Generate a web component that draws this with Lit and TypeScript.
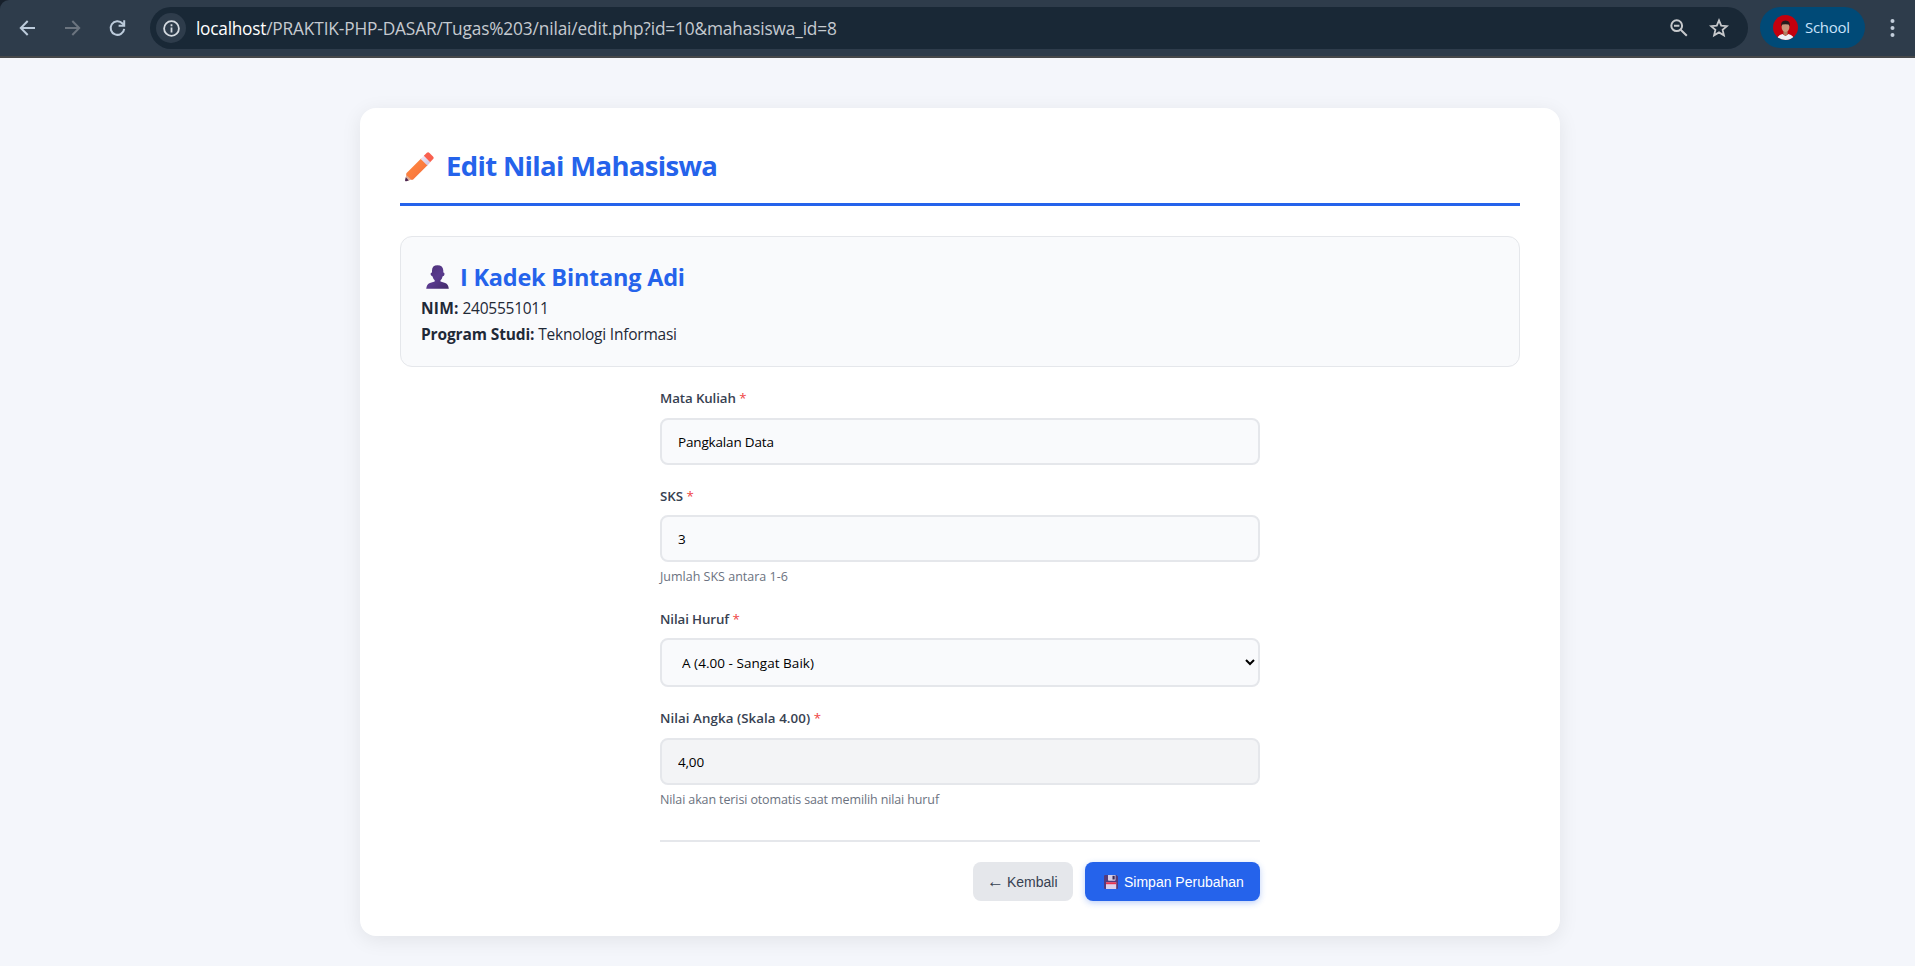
import { LitElement, html, css, svg } from "lit";
import { customElement } from "lit/decorators.js";

const pencil = svg`<defs>
  <linearGradient id="wood" x1="0" y1="0" x2="1" y2="1"><stop offset="0" stop-color="#ff8a3c"/><stop offset=".55" stop-color="#fb7c3f"/><stop offset="1" stop-color="#ec6338"/></linearGradient>
  <linearGradient id="band" x1="0" y1="0" x2="1" y2="1"><stop offset="0" stop-color="#f3ecfa"/><stop offset="1" stop-color="#c9bfe0"/></linearGradient></defs>
  <path d="M1.6 21.5 7.6 27.3 1.2 29.2Q0 29.4 .1 28.2Z" fill="#dfb09a"/>
  <path d="M.8 25.2 3.8 28.4 1.1 29.2Q0 29.4.1 28.3Z" fill="#4a2754"/>
  <path d="M16.4 6.2 23 12.7 8.2 27.4Q7 28.3 5.8 27.3L1.6 23.2Q.8 22 1.6 21Z" fill="url(#wood)"/>
  <path d="M18.6 4 25.2 10.5 22.3 13.4 15.7 6.9Z" fill="url(#band)"/>
  <path d="M18.8 3.8 21.9.8Q23.2-.2 24.5.9L28 4.4Q29.3 5.7 28.1 7.1L25.1 10.2Z" fill="#f9604f"/>`;

const person = svg`<defs><linearGradient id="skin" x1="0" y1="0" x2="1" y2="1"><stop offset="0" stop-color="#4a2f74"/><stop offset=".5" stop-color="#5a3a8e"/><stop offset="1" stop-color="#412a66"/></linearGradient></defs>
  <path d="M6 5.4Q6 .2 11.5.2T17.3 5.4V7.5Q18.7 7.4 18.5 9.2T16.7 11.2Q16 14 14.5 15.2V16.4L19.2 18.1Q22.4 19.3 22.8 23.8H.2Q.7 19.3 3.9 18.1L8.7 16.4V15.2Q7.2 14 6.4 11.2 4.8 10.8 4.6 9.2T6 7.5Z" fill="url(#skin)"/>`;

const floppy = svg`<path d="M1.3 0H12.4L14 1.6V13Q14 14 13 14H1Q0 14 0 13V1Q0 0 1.3 0Z" fill="#553a7b"/>
  <path d="M4 0H11.5V5Q11.5 5.8 10.7 5.8H4.8Q4 5.8 4 5Z" fill="#d8cfe8"/><path d="M8.5.8H10.7V4.5H8.5Z" fill="#3b2954"/>
  <path d="M2 7.3H12.2V14H2Z" fill="#dcd0ea"/><path d="M2 7.3H12.2V9.2H2Z" fill="#e8344f"/>`;

@customElement("app-root")
export class AppRoot extends LitElement {
  static styles = css`
    :host { display: block; min-height: 966px; background: #f4f6fb; font-family: "Open Sans", "Noto Sans", sans-serif; color: #1f2937; }
    * { box-sizing: border-box; }
    svg { display: block; flex: none; }
    .corner { background: #17202b; }
    .chrome { height: 58px; display: flex; align-items: flex-start; background: #2e3c4b; border-bottom: 2px solid #46484a; border-top-left-radius: 9px; padding: 7px 20px 0 17px; }
    .nav { display: flex; width: 133px; height: 41px; align-items: center; gap: 24px; }
    .nav svg { stroke: #bccbdb; fill: none; stroke-width: 2; }
    .nav .off { stroke: #6b747f; }
    .bar { flex: 1; height: 42px; border-radius: 21px; background: #192836; display: flex; align-items: center; padding: 0 19px 0 6px; }
    .info { width: 30px; height: 30px; border-radius: 50%; background: #2e3c4b; display: grid; place-items: center; }
    .url { flex: 1; margin-left: 10px; padding-top: 2px; font-size: 17.3px; line-height: 40px; letter-spacing: -.15px; color: #c5cad0; white-space: nowrap; }
    .host { color: #fff; letter-spacing: -.25px; }
    .tools { display: flex; gap: 21px; align-items: center; }
    .profile { width: 105px; height: 41px; margin-left: 12px; border-radius: 21px; background: #004a77; color: #c9e3fb; display: flex; align-items: center; padding-left: 13px; gap: 7px; font-size: 15px; line-height: 38px; letter-spacing: -.3px; }
    .profile span { padding-bottom: 2px; }
    .more { margin-left: 25px; height: 41px; display: flex; align-items: center; }
    .card { width: 1200px; height: 828px; margin: 50px 0 0 360px; padding: 40px; background: #fff; border-radius: 16px; box-shadow: 0 4px 20px rgba(0, 0, 0, .08); }
    h1 { margin: 0 0 30px; display: flex; height: 58px; border-bottom: 3px solid #2563eb; color: #2563eb; font-size: 27.5px; line-height: 35px; letter-spacing: -.67px; }
    h1 svg { margin: 4px 12px 0 5px; }
    .student { height: 131px; border: 1px solid #e5e7eb; border-radius: 12px; background: #f9fafc; padding: 21px 20px 19px; font-size: 15.5px; line-height: 26px; letter-spacing: -.22px; }
    h2 { margin: 0; display: flex; height: 37px; color: #2563eb; font-size: 23.5px; line-height: 39px; letter-spacing: -.22px; }
    h2 svg { margin: 7px 11px 0 5px; }
    .student b { letter-spacing: -.13px; }
    .student .nim { letter-spacing: .2px; }
    .student .num { letter-spacing: -.24px; }
    form { width: 600px; margin: 0 auto; }
    .field { padding-top: 20px; }
    .field.after { padding-top: 21px; }
    label { display: block; height: 30px; font-size: 13.3px; line-height: 22px; font-weight: 600; color: #374151; }
    label.tall { height: 31px; }
    .tight { letter-spacing: -.1px; }
    .wide { letter-spacing: .07px; }
    i { font-style: normal; font-weight: 400; color: #ef4444; }
    input, select { display: block; width: 600px; height: 47px; margin: 0; border: 2px solid #e5e7eb; border-radius: 8px; background: #f9fafc; padding: 0 16px; font: 13.5px "Open Sans", "Noto Sans", sans-serif; color: #000; outline: 0; letter-spacing: -.17px; }
    select { height: 49px; letter-spacing: .04px; }
    input[readonly] { background: #f3f4f6; }
    small { display: block; margin-top: 5px; height: 20px; font-size: 12.5px; line-height: 20px; color: #6b7280; }
    .auto { letter-spacing: -.12px; }
    .actions { margin-top: 30px; border-top: 2px solid #e5e7eb; padding-top: 20px; display: flex; justify-content: flex-end; gap: 12px; }
    button { height: 39px; border: 0; border-radius: 8px; padding: 0 16px; display: flex; align-items: center; font: 14px "Liberation Sans", Arial, sans-serif; }
    .back { width: 100px; background: #e5e7eb; color: #374151; white-space: nowrap; padding: 0 0 0 14px; gap: 5px; }
    .arrow { width: 15px; font-size: 17px; line-height: 14px; }
    .save { width: 175px; background: #2563eb; color: #fff; padding-left: 19px; gap: 6px; white-space: nowrap; box-shadow: 0 2px 6px rgba(37, 99, 235, .3); }
  `;

  private label(text: string, cls = "") {
    return html`<label class=${cls}>${text} <i>*</i></label>`;
  }

  render() {
    return html`
      <div class="corner"><header class="chrome">
        <div class="nav">
          <svg width="21" height="18" viewBox="0 0 21 18"><path d="M18 9H4.5M10.7 2 3.8 9l6.9 7"/></svg>
          <svg class="off" width="21" height="18" viewBox="0 0 21 18"><path d="M3 9h13.5M10.3 2l6.9 7-6.9 7"/></svg>
          <svg width="21" height="18" viewBox="0 0 21 18"><path d="M17.2 9.8A6.8 6.8 0 1 1 15.5 4.5L17 6"/><path d="M17.2 1.2V6.8H11.6"/></svg>
        </div>
        <div class="bar">
          <div class="info"><svg width="17" height="17" viewBox="0 0 17 17" fill="none" stroke="#d5dae0" stroke-width="1.8"><circle cx="8.5" cy="8.5" r="7.4"/><path d="M8.5 7.6v4.8M8.5 4.3v1.9"/></svg></div>
          <div class="url"><span class="host">localhost</span>/PRAKTIK-PHP-DASAR/Tugas%203/nilai/edit.php?id=10&amp;mahasiswa_id=8</div>
          <div class="tools">
            <svg width="18" height="18" viewBox="0 0 18 18" fill="none" stroke="#c7c9cc" stroke-width="2"><circle cx="6.7" cy="6.7" r="5.4"/><path d="M10.7 10.7 16.8 16.8M4 6.7h5.4"/></svg>
            <svg width="20" height="20" viewBox="0 0 20 20" fill="none" stroke="#c7c9cc" stroke-width="1.8"><path d="M10 2.4 12.2 7.6 17.9 8.1 13.6 11.8 14.9 17.3 10 14.4 5.1 17.3 6.4 11.8 2.1 8.1 7.8 7.6Z"/></svg>
          </div>
        </div>
        <div class="profile">
          <svg width="25" height="25" viewBox="0 0 25 25"><defs><clipPath id="disc"><circle cx="12.5" cy="12.5" r="12.5"/></clipPath></defs>
            <g clip-path="url(#disc)"><path fill="#c3000d" d="M0 0h25v25H0z"/><path fill="#eef0f7" d="M4 25Q3.8 20.6 9.5 19L12.5 21 15.5 19Q21.2 20.6 21 25Z"/><path fill="#b07c62" d="M10.4 15h4.2v4.3L12.5 21 10.4 19.3Z"/><ellipse cx="12.5" cy="12" rx="3.9" ry="5" fill="#c8957a"/><path fill="#241a1c" d="M8.4 11.6Q7.2 5.6 12.5 5.6T16.6 11.6L15.7 9.6Q12.5 8.8 9.3 9.6Z"/></g></svg>
          <span>School</span>
        </div>
        <div class="more"><svg width="5" height="20" viewBox="0 0 5 20" fill="#c3cedb"><circle cx="2.5" cy="3" r="2"/><circle cx="2.5" cy="10" r="2"/><circle cx="2.5" cy="17" r="2"/></svg></div>
      </header></div>
      <main class="card">
        <h1><svg width="29" height="30" viewBox="0 0 29 30">${pencil}</svg>Edit Nilai Mahasiswa</h1>
        <section class="student">
          <h2><svg width="23" height="24" viewBox="0 0 23 24">${person}</svg>I Kadek Bintang Adi</h2>
          <div><b class="nim">NIM:</b> <span class="num">2405551011</span></div>
          <div><b>Program Studi:</b> Teknologi Informasi</div>
        </section>
        <form>
          <div class="field">${this.label("Mata Kuliah", "tight tall")}<input .value=${"Pangkalan Data"} /></div>
          <div class="field">${this.label("SKS")}<input .value=${"3"} /><small>Jumlah SKS antara 1-6</small></div>
          <div class="field after">${this.label("Nilai Huruf", "tight")}<select><option>A (4.00 - Sangat Baik)</option></select></div>
          <div class="field">${this.label("Nilai Angka (Skala 4.00)", "wide tall")}<input readonly .value=${"4,00"} /><small class="auto">Nilai akan terisi otomatis saat memilih nilai huruf</small></div>
          <div class="actions">
            <button type="button" class="back"><span class="arrow">←</span>Kembali</button>
            <button type="button" class="save"><svg width="14" height="14" viewBox="0 0 14 14">${floppy}</svg>Simpan Perubahan</button>
          </div>
        </form>
      </main>`;
  }
}
